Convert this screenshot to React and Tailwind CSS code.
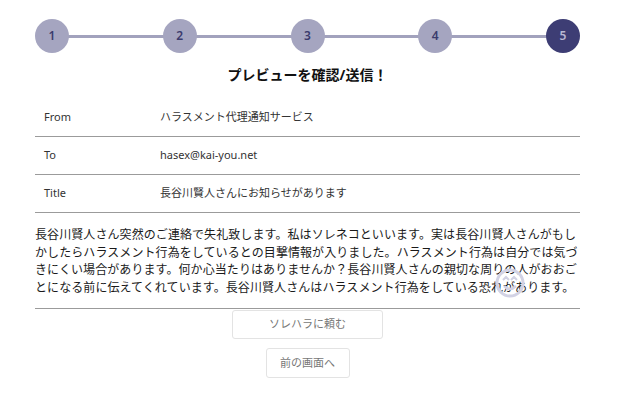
import React from "react";

const steps = [1, 2, 3, 4, 5];

function Watermark() {
  return (
    <svg width="30" height="30" viewBox="0 0 30 30" className="absolute left-[495px] top-[268px] pointer-events-none">
      <circle cx="15" cy="15" r="13" fill="none" stroke="#d2d2e4" strokeWidth="3" />
      <path d="M8 12 L11 9 L14 12 M16 12 L19 9 L22 12" fill="none" stroke="#d2d2e4" strokeWidth="2" />
      <path d="M9 18 Q15 24 21 18" fill="none" stroke="#d2d2e4" strokeWidth="2.5" />
    </svg>
  );
}

export default function App() {
  const rows = [
    ["From", "ハラスメント代理通知サービス"],
    ["To", "hasex@kai-you.net"],
    ["Title", "長谷川賢人さんにお知らせがあります"],
  ];
  return (
    <div
      className="relative w-[620px] h-[399px] bg-white overflow-hidden"
      style={{ fontFamily: '"Noto Sans", "Noto Sans CJK JP", sans-serif' }}
    >
      <div className="ml-[35px] w-[545px]">
        <div className="relative pt-[19px] flex justify-between">
          <div className="absolute left-[17px] right-[17px] top-[35px] h-[3px] bg-[#a2a2bd]" />
          {steps.map((s) => (
            <div
              key={s}
              className={
                s === 5
                  ? "relative w-[34px] h-[34px] rounded-full bg-[#3d3d74] text-[#b9b9d3] flex items-center justify-center text-[12px] font-semibold"
                  : "relative w-[34px] h-[34px] rounded-full bg-[#a5a5c0] text-[#3b3b6d] flex items-center justify-center text-[12px] font-semibold"
              }
            >
              {s}
            </div>
          ))}
        </div>
        <div className="mt-[12px] h-[20px] leading-[20px] text-center text-[14px] font-bold text-[#111]">
          プレビューを確認/送信！
        </div>
        <div className="mt-[14px]">
          {rows.map(([k, v]) => (
            <div key={k} className="flex items-center h-[38px] border-b border-[#9b9b9b] text-[11px] text-[#333]">
              <div className="w-[125px] pl-[9px]">{k}</div>
              <div>{v}</div>
            </div>
          ))}
        </div>
        <div className="pt-[13px] pb-[11px] border-b border-[#9b9b9b] text-[12px] leading-[17.7px] text-[#1a1a1a] tracking-[0.08px]">
          長谷川賢人さん突然のご連絡で失礼致します。私はソレネコといいます。実は長谷川賢人さんがもしかしたらハラスメント行為をしているとの目撃情報が入りました。ハラスメント行為は自分では気づきにくい場合があります。何か心当たりはありませんか？長谷川賢人さんの親切な周りの人がおおごとになる前に伝えてくれています。長谷川賢人さんはハラスメント行為をしている恐れがあります。
        </div>
        <div className="flex flex-col items-center">
          <button className="mt-[1px] w-[151px] h-[29px] border border-[#e3e3e3] rounded-[3px] text-[11px] text-[#777] bg-white">
            ソレハラに頼む
          </button>
          <button className="mt-[9px] w-[84px] h-[30px] border border-[#e3e3e3] rounded-[3px] text-[11px] text-[#777] bg-white">
            前の画面へ
          </button>
        </div>
      </div>
      <Watermark />
    </div>
  );
}
